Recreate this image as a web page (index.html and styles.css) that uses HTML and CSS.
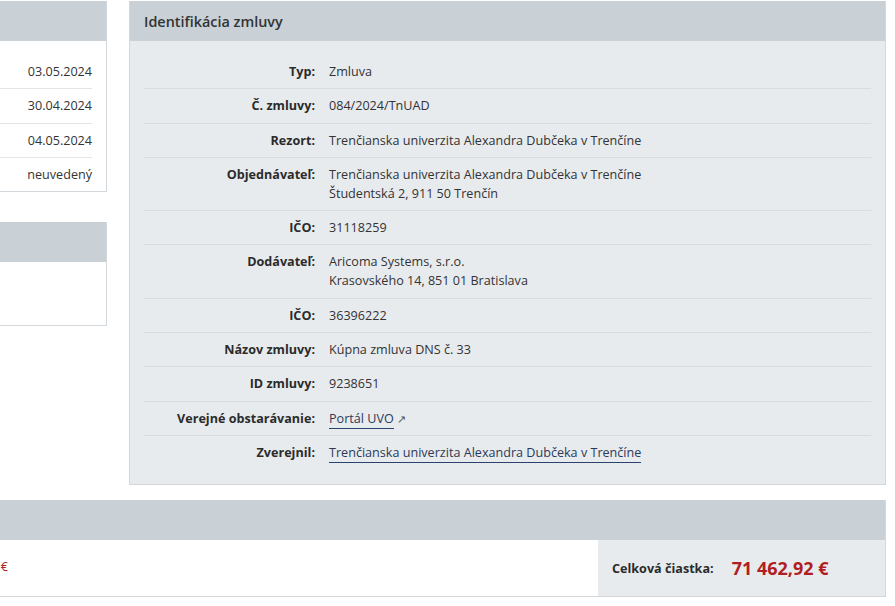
FILE: index.html
```
<!DOCTYPE html>
<html lang="sk">
<head>
<meta charset="UTF-8" />
<meta name="viewport" content="width=device-width, initial-scale=1" />
<title>Zmluva 084/2024/TnUAD</title>
<link rel="stylesheet" href="styles.css">
</head>
<body>
    <div class="page">
        <div class="top">
            <div class="side">
                <div class="panel side-panel">
                    <div class="panel-head"></div>
                    <div class="panel-body dates">
                        <div class="date-row">03.05.2024</div>
                        <div class="date-row">30.04.2024</div>
                        <div class="date-row">04.05.2024</div>
                        <div class="date-row">neuvedený</div>
                    </div>
                </div>
                <div class="panel side-panel">
                    <div class="panel-head"></div>
                    <div class="panel-body empty"></div>
                </div>
            </div>

            <div class="panel main-panel">
                <div class="panel-head">Identifikácia zmluvy</div>
                <div class="panel-body">
                    <div class="row"><div class="label">Typ:</div><div class="value">Zmluva</div></div>
                    <div class="row"><div class="label">Č. zmluvy:</div><div class="value">084/2024/TnUAD</div></div>
                    <div class="row"><div class="label">Rezort:</div><div class="value">Trenčianska univerzita Alexandra Dubčeka v Trenčíne</div></div>
                    <div class="row"><div class="label">Objednávateľ:</div><div class="value">Trenčianska univerzita Alexandra Dubčeka v Trenčíne<br />Študentská 2, 911 50 Trenčín</div></div>
                    <div class="row"><div class="label">IČO:</div><div class="value">31118259</div></div>
                    <div class="row"><div class="label">Dodávateľ:</div><div class="value">Aricoma Systems, s.r.o.<br />Krasovského 14, 851 01 Bratislava</div></div>
                    <div class="row"><div class="label">IČO:</div><div class="value">36396222</div></div>
                    <div class="row"><div class="label">Názov zmluvy:</div><div class="value">Kúpna zmluva DNS č. 33</div></div>
                    <div class="row"><div class="label">ID zmluvy:</div><div class="value">9238651</div></div>
                    <div class="row"><div class="label">Verejné obstarávanie:</div><div class="value"><a href="#">Portál UVO</a><span class="ext">&#8599;</span></div></div>
                    <div class="row"><div class="label">Zverejnil:</div><div class="value"><a href="#">Trenčianska univerzita Alexandra Dubčeka v Trenčíne</a></div></div>
                </div>
            </div>
        </div>

        <div class="panel sum-panel">
            <div class="panel-head"></div>
            <div class="sum-body">
                <div class="sum-cell">€</div>
                <div class="sum-fill"></div>
                <div class="sum-total">
                    <span class="sum-label">Celková čiastka:</span>
                    <span class="sum-value">71 462,92 €</span>
                </div>
            </div>
        </div>
    </div>
</body>
</html>
```

FILE: styles.css
```
* {
    margin: 0;
    padding: 0;
    box-sizing: border-box;
}

body {
    font-family: 'Open Sans', 'Noto Sans', sans-serif;
    font-size: 12.6px;
    line-height: 19px;
    color: #333;
    background: #fff;
    overflow: hidden;
}

/* page is scrolled sideways, left column is cut off */
.page {
    width: 1086px;
    margin-left: -200px;
    padding-top: 1px;
}

.top {
    display: grid;
    grid-template-columns: 307px 757px;
    column-gap: 22px;
    align-items: start;
}

/* Panels */
.panel {
    border: 1px solid #d3d8dc;
    border-top: none;
}

.panel-head {
    height: 40px;
    background-color: #c9d0d6;
    padding: 11px 14px 0;
    font-size: 14.4px;
    font-weight: 600;
    color: #333;
}

.panel-body {
    background-color: #e8ebee;
    padding: 14px 14px 15px;
}

/* Left column */
.side {
    display: flex;
    flex-direction: column;
    gap: 30px;
}

.side-panel .panel-body {
    background-color: #fff;
}

.dates {
    padding-bottom: 0;
}

.date-row {
    text-align: right;
    padding: 7px 0 7.3px;
    border-top: 1px solid #e3e6e9;
}

.date-row:first-child {
    border-top: none;
}

.empty {
    height: 63px;
}

/* Identifikácia zmluvy */
.row {
    display: grid;
    grid-template-columns: 171px 1fr;
    column-gap: 14px;
    padding: 7px 0 7.3px;
    border-top: 1px solid #d9dde1;
}

.row:first-child {
    border-top: none;
}

.label {
    text-align: right;
    font-weight: 700;
    color: #2b2b2b;
}

.value a {
    color: #2c3a58;
    text-decoration: none;
    border-bottom: 1px solid #2b4270;
    padding-bottom: 1px;
}

.ext {
    font-size: 11px;
    margin-left: 3px;
    color: #555;
}

/* Celková čiastka */
.sum-panel {
    margin-top: 15px;
    width: 1086px;
}

.sum-body {
    display: flex;
    height: 56px;
    background-color: #fff;
}

.sum-cell {
    width: 207px;
    text-align: right;
    padding-top: 17px;
    color: #b01e24;
}

.sum-fill {
    flex: 1;
}

.sum-total {
    width: 287px;
    background-color: #e8ebee;
    display: flex;
    align-items: center;
    padding: 0 14px 0;
}

.sum-label {
    font-weight: 700;
    color: #2b2b2b;
    margin-right: 18px;
}

.sum-value {
    font-size: 18px;
    font-weight: 700;
    color: #b01e24;
}
```
